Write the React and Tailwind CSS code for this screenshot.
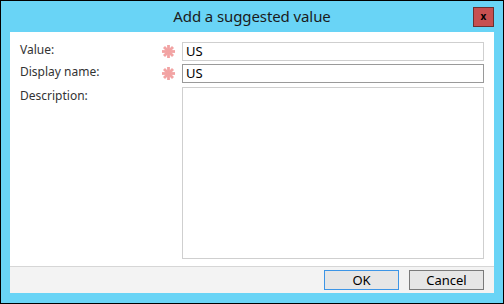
import React from 'react';

const Star = () => (
  <svg width="13" height="13" viewBox="0 0 13 13" className="block">
    <g stroke="#f2a3a3" strokeWidth="2.8" strokeLinecap="butt">
      <line x1="6.5" y1="0" x2="6.5" y2="13" />
      <line x1="0" y1="6.5" x2="13" y2="6.5" />
      <line x1="2" y1="2" x2="11" y2="11" />
      <line x1="11" y1="2" x2="2" y2="11" />
    </g>
  </svg>
);

export default function App() {
  return (
    <div className="w-[504px] h-[304px] border border-black bg-[#69d4f6] flex flex-col px-[9px] pb-[10px] font-['Noto_Sans',sans-serif] text-[#333]">
      {/* Title bar */}
      <div className="h-[31px] relative flex items-center justify-center shrink-0">
        <span className="text-[15px] text-[#1b1b1b] tracking-[-0.1px]">Add a suggested value</span>
        <div className="absolute right-[0px] top-[6px] w-[21px] h-[20px] bg-[#c75050] border border-[#6b3030] flex items-center justify-center">
          <span className="text-[10px] font-bold text-black leading-none -mt-[2px]">x</span>
        </div>
      </div>

      {/* Body */}
      <div className="flex-1 bg-white flex flex-col">
        <div className="flex-1 flex flex-col gap-[3px] px-[10px] pt-[10px] pb-[7px] text-[12px]">
          <div className="flex items-center h-[19px]">
            <span className="w-[142px] leading-none -mt-[3px]">Value:</span>
            <span className="w-[20px] flex justify-start"><Star /></span>
            <div className="flex-1 h-[19px] border border-[#cfcfcf] flex items-center px-[3px] text-[13px] text-black">US</div>
          </div>
          <div className="flex items-center h-[19px]">
            <span className="w-[142px] leading-none -mt-[3px]">Display name:</span>
            <span className="w-[20px] flex justify-start"><Star /></span>
            <div className="flex-1 h-[19px] border border-[#9a9a9a] flex items-center px-[3px] text-[13px] text-black">US</div>
          </div>
          <div className="flex flex-1 mt-[1px]">
            <span className="w-[162px] leading-none pt-[3px]">Description:</span>
            <div className="flex-1 border border-[#cfcfcf]" />
          </div>
        </div>
        {/* Footer */}
        <div className="h-[27px] border-t border-[#d6d6d6] bg-[#f3f3f3] flex items-center justify-end gap-[10px] pr-[10px] shrink-0">
          <button className="w-[75px] h-[20px] bg-[#e6e6e6] border border-[#3d95e6] text-[13px] text-black leading-none">OK</button>
          <button className="w-[75px] h-[20px] bg-[#e6e6e6] border border-[#7a7a7a] text-[13px] text-black leading-none">Cancel</button>
        </div>
      </div>
    </div>
  );
}
